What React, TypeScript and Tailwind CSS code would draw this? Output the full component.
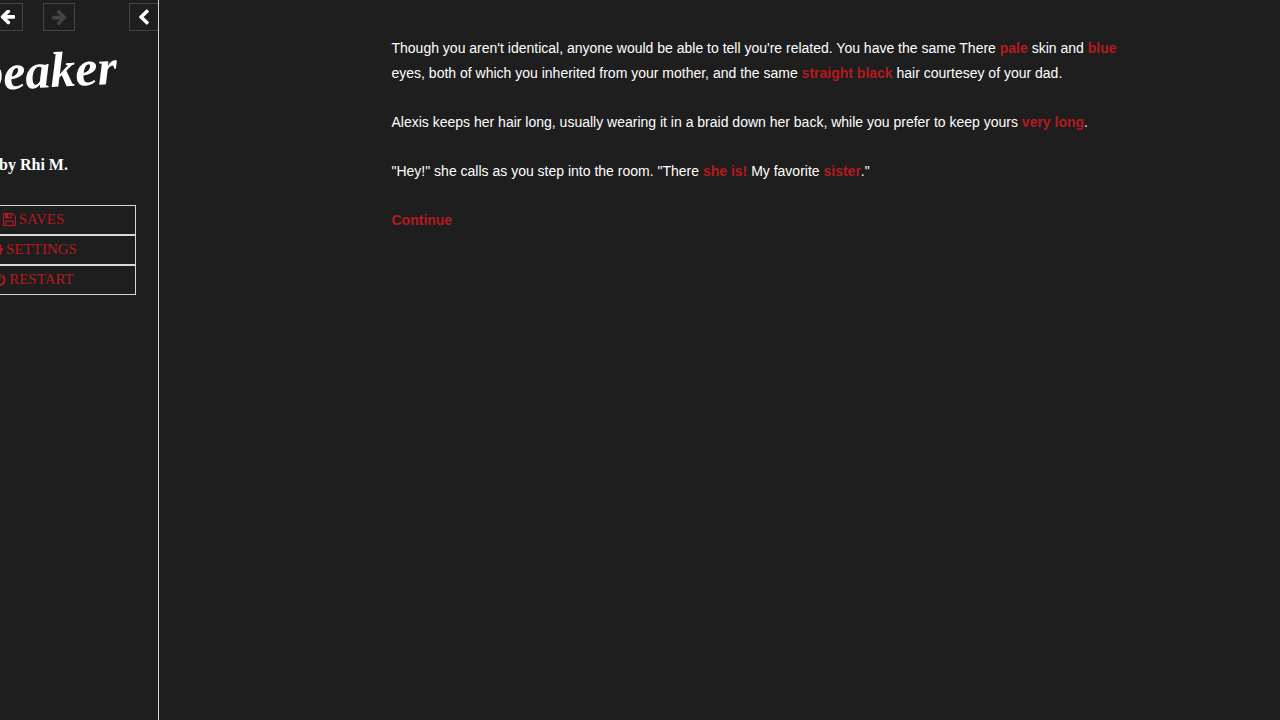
import type { ReactNode } from "react";

const ARROW =
  "M1536 896v128q0 53-32.5 90.5t-84.5 37.5h-704l293 294q38 36 38 90t-38 90l-75 76q-37 37-90 37-52 0-91-37l-651-652q-37-37-37-90 0-52 37-91l651-650q38-38 91-38 52 0 90 38l75 74q38 38 38 91t-38 91l-293 293h704q52 0 84.5 37.5t32.5 90.5z";
const CHEVRON =
  "M1171 301l-531 531 531 531q19 19 19 45t-19 45l-166 166q-19 19-45 19t-45-19l-742-742q-19-19-19-45t19-45l742-742q19-19 45-19t45 19l166 166q19 19 19 45t-19 45z";
const FLOPPY =
  "M384 1536h768v-384h-768v384zM1280 1536h128v-896q0-14-10-38.5t-20-34.5l-281-281q-10-10-34-20t-39-10v416q0 40-28 68t-68 28h-576q-40 0-68-28t-28-68v-416h-128v1280h128v-416q0-40 28-68t68-28h832q40 0 68 28t28 68v416zM896 608v-320q0-13-9.5-22.5t-22.5-9.5h-192q-13 0-22.5 9.5t-9.5 22.5v320q0 13 9.5 22.5t22.5 9.5h192q13 0 22.5-9.5t9.5-22.5zM1536 640v928q0 40-28 68t-68 28h-1344q-40 0-68-28t-28-68v-1344q0-40 28-68t68-28h928q40 0 88 20t76 48l280 280q28 28 48 76t20 88z";
const GEAR =
  "M1024 896q0-106-75-181t-181-75-181 75-75 181 75 181 181 75 181-75 75-181zM1536 787v222q0 12-8 23t-20 13l-185 28q-19 54-39 91 35 50 107 138 10 12 10 25t-9 23q-27 37-99 108t-94 71q-12 0-26-9l-138-108q-44 23-91 38-16 136-29 186-7 28-36 28h-222q-14 0-24.500-8.500t-11.500-21.500l-28-184q-49-16-90-37l-141 107q-10 9-25 9-14 0-25-11-126-114-165-168-7-10-7-23 0-12 8-23 15-21 51-66.500t54-70.500q-27-50-41-99l-183-27q-13-2-21-12.500t-8-23.500v-222q0-12 8-23t19-13l186-28q14-46 39-92-40-57-107-138-10-12-10-24 0-10 9-23 26-36 98.500-107.500t94.500-71.500q13 0 26 10l138 107q44-23 91-38 16-136 29-186 7-28 36-28h222q14 0 24.500 8.500t11.500 21.500l28 184q49 16 90 37l142-107q9-9 24-9 13 0 25 10 129 119 165 170 7 8 7 22 0 12-8 23-15 21-51 66.500t-54 70.500q26 50 41 98l183 28q13 2 21 12.500t8 23.500z";
const POWER =
  "M1536 896q0 156-61 298t-164 245-245 164-298 61-298-61-245-164-164-245-61-298q0-182 80.5-343t226.5-270q43-32 95.5-25t83.5 50q32 42 24.5 94.5t-49.5 84.5q-98 74-151.5 181t-53.5 228q0 104 40.5 198.5t109.500 163.500 163.500 109.500 198.500 40.500 198.500-40.500 163.500-109.500 109.500-163.500 40.500-198.500q0-121-53.500-228t-151.500-181q-42-32-49.500-84.500t24.500-94.500q31-43 84-50t95 25q146 109 226.500 270t80.500 343zM896 128v640q0 52-38 90t-90 38-90-38-38-90v-640q0-52 38-90t90-38 90 38 38 90z";

function Glyph({ d, className, viewBox = "0 128 1536 1536" }: { d: string; className: string; viewBox?: string }) {
  return (
    <svg viewBox={viewBox} className={className} fill="currentColor" aria-hidden="true">
      <path d={d} />
    </svg>
  );
}

function MenuItem({ icon, children }: { icon: ReactNode; children: ReactNode }) {
  return (
    <li>
      <button
        type="button"
        className="flex h-[30px] w-full items-center justify-center gap-[3px] border border-[#d8d8d8] pb-[2px] text-[15px] text-[#b41a1e]"
      >
        {icon}
        <span>{children}</span>
      </button>
    </li>
  );
}

function Choice({ children }: { children: ReactNode }) {
  return (
    <a href="#" className="font-bold text-[#b41a1e]">
      {children}
    </a>
  );
}

function Sidebar() {
  return (
    <aside className="flex w-[159px] shrink-0 justify-end overflow-hidden border-r border-[#d8d8d8] font-['Liberation_Serif',serif]">
      <div className="w-[249px] shrink-0">
        <div className="flex justify-end pt-[3px]">
          <button type="button" aria-label="Go back" className="flex h-7 w-8 items-center justify-center border border-[#444]">
            <Glyph d={ARROW} className="size-[15px]" viewBox="0 256 1536 1536" />
          </button>
          <button
            type="button"
            aria-label="Go forward"
            disabled
            className="ml-5 flex h-7 w-8 items-center justify-center border border-[#444] text-[#444]"
          >
            <Glyph d={ARROW} className="size-[15px] rotate-180" viewBox="0 192 1536 1536" />
          </button>
          <button
            type="button"
            aria-label="Toggle the sidebar"
            className="ml-[54px] flex h-7 w-[29px] items-center justify-center border border-r-0 border-[#444]"
          >
            <Glyph d={CHEVRON} className="size-4" viewBox="-90 0 1536 1664" />
          </button>
        </div>
        <div className="px-[22px] text-center">
          <h1 className="mt-2 -rotate-3 text-[50px] leading-[64px] font-bold italic">Speaker</h1>
          <p className="mt-[50px] text-[16px] leading-6 font-bold">by Rhi M.</p>
          <ul className="mt-7">
            <MenuItem icon={<Glyph d={FLOPPY} className="size-[13px]" />}>SAVES</MenuItem>
            <MenuItem icon={<Glyph d={GEAR} className="size-[13px]" />}>SETTINGS</MenuItem>
            <MenuItem icon={<Glyph d={POWER} className="size-[13px]" viewBox="0 0 1536 1664" />}>RESTART</MenuItem>
          </ul>
        </div>
      </div>
    </aside>
  );
}

export default function App() {
  return (
    <div className="flex min-h-screen bg-[#1e1e1e] text-white">
      <Sidebar />
      <main className="flex flex-1 justify-center pt-9 pr-8 pl-[114px] font-['Liberation_Sans',Arial,sans-serif] text-[14px] leading-[25px]">
        <article className="flex w-full max-w-[738px] flex-col gap-6">
          <p>
            Though you aren't identical, anyone would be able to tell you're related. You have the same There{" "}
            <Choice>pale</Choice> skin and <Choice>blue</Choice> eyes, both of which you inherited from your mother,
            and the same <Choice>straight black</Choice> hair courtesey of your dad.
          </p>
          <p>
            Alexis keeps her hair long, usually wearing it in a braid down her back, while you prefer to keep yours{" "}
            <Choice>very long</Choice>.
          </p>
          <p>
            "Hey!" she calls as you step into the room. "There <Choice>she is!</Choice> My favorite{" "}
            <Choice>sister</Choice>."
          </p>
          <p>
            <Choice>Continue</Choice>
          </p>
        </article>
      </main>
    </div>
  );
}
